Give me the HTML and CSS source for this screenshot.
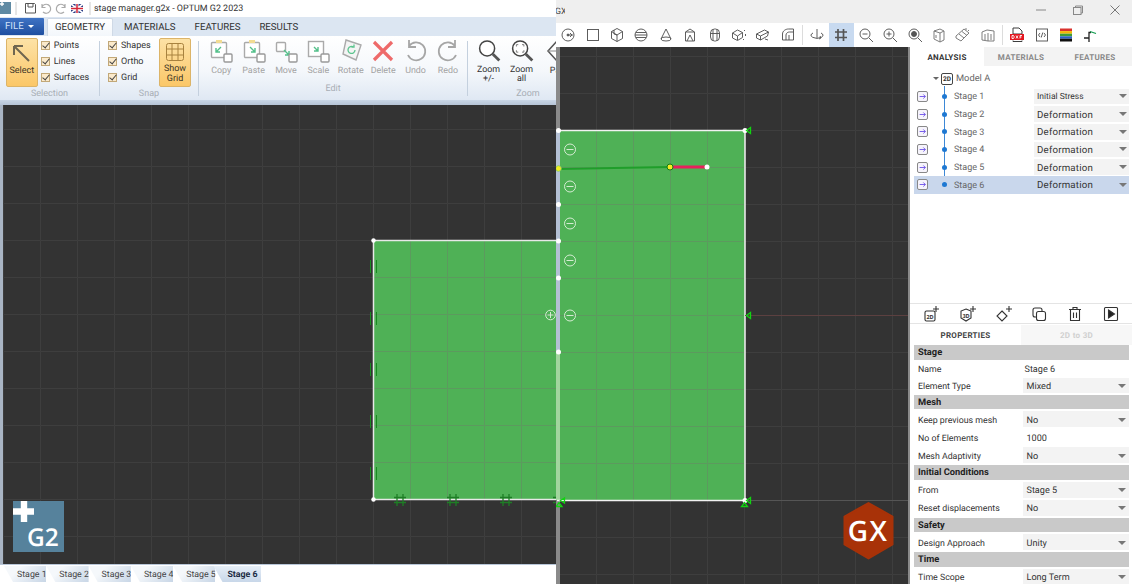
FILE: index.html
```html
<!DOCTYPE html>
<html lang="en">
<head>
<meta charset="utf-8">
<title>stage manager.g2x - OPTUM G2 2023</title>
<link rel="stylesheet" href="styles.css">
</head>
<body>
<div class="app">
  <section class="g2">
    <header class="g2-title">
      <svg class="qa" width="94" height="15" viewBox="0 0 94 15">
        <rect x="0" y="1" width="11" height="12" fill="#5f8aa3"/>
        <path d="M0 3h4M2 1v4" stroke="#fff" stroke-width="1.400"/>
        <path d="M16 1v13" stroke="#ccc"/>
        <path d="M25.500 2.500h9l1 1v8.500h-10z" fill="none" stroke="#555"/>
        <path d="M28 3v3h5V3" fill="none" stroke="#555"/>
        <path d="M42 6a4.500 4.500 0 1 1 1 5M42 3v3.500h3.500" fill="none" stroke="#aaa" stroke-width="1.200"/>
        <path d="M65 6a4.500 4.500 0 1 0-1 5M65 3v3.500h-3.500" fill="none" stroke="#aaa" stroke-width="1.200"/>
        <rect x="71" y="3" width="12" height="9" fill="#2b3f87"/>
        <path d="M71 3l12 9M83 3l-12 9" stroke="#fff" stroke-width="1.600"/>
        <path d="M77 3v9M71 7.500h12" stroke="#fff" stroke-width="3"/>
        <path d="M77 3v9M71 7.500h12" stroke="#d3263a" stroke-width="1.500"/>
        <path d="M90 1v13" stroke="#ccc"/>
      </svg>
      <span class="g2-name">stage manager.g2x - OPTUM G2 2023</span>
    </header>
    <nav class="g2-tabs">
      <span class="file">FILE <i class="file-caret"></i></span>
      <span class="rtab rtab-on">GEOMETRY</span>
      <span class="rtab">MATERIALS</span>
      <span class="rtab">FEATURES</span>
      <span class="rtab">RESULTS</span>
    </nav>
    <div class="ribbon">
      <div class="group g-sel">
        <div class="group-body">
          <div class="big-on b-select">
            <svg width="22" height="22" viewBox="0 0 22 22"><path d="M3 3l15 15M3 3h9M3 3v9" fill="none" stroke="#6f6650" stroke-width="2"/></svg>
            <span>Select</span>
          </div>
          <ul class="checks">
            <li><i class="cb"></i>Points</li>
            <li><i class="cb"></i>Lines</li>
            <li><i class="cb"></i>Surfaces</li>
          </ul>
        </div>
        <div class="glabel">Selection</div>
      </div>
      <div class="group g-snap">
        <div class="group-body">
          <ul class="checks">
            <li><i class="cb"></i>Shapes</li>
            <li><i class="cb"></i>Ortho</li>
            <li><i class="cb"></i>Grid</li>
          </ul>
          <div class="big-on b-grid">
            <svg width="20" height="20" viewBox="0 0 20 20"><rect x="1.500" y="1.500" width="17" height="17" rx="2" fill="none" stroke="#a8823f"/><path d="M7 1.500v17M13 1.500v17M1.500 7h17M1.500 13h17" stroke="#a8823f"/></svg>
            <span>Show<br>Grid</span>
          </div>
        </div>
        <div class="glabel">Snap</div>
      </div>
      <div class="group g-edit">
        <div class="group-body tools">
          <div class="tool"><svg width="24" height="24" viewBox="0 0 24 24"><rect x="2.500" y="3.500" width="15" height="15" rx="1" fill="#fff" stroke="#aaa" stroke-width="1.400"/><rect x="7" y="1" width="6" height="3" fill="#f2dc92"/><path d="M7 13l5-5M7 9v4h4" fill="none" stroke="#53c08a" stroke-width="1.400"/><rect x="15" y="15" width="8" height="8" rx="1" fill="#fff" stroke="#999" stroke-width="1.400"/></svg><span>Copy</span></div>
          <div class="tool"><svg width="24" height="24" viewBox="0 0 24 24"><rect x="2.500" y="3.500" width="15" height="15" rx="1" fill="#fff" stroke="#aaa" stroke-width="1.400"/><rect x="7" y="1" width="6" height="3" fill="#f2dc92"/><path d="M13 13L8 8M13 9v4H9" fill="none" stroke="#53c08a" stroke-width="1.400"/><rect x="15" y="15" width="8" height="8" rx="1" fill="#fff" stroke="#999" stroke-width="1.400"/></svg><span>Paste</span></div>
          <div class="tool"><svg width="24" height="24" viewBox="0 0 24 24"><rect x="2.500" y="3.500" width="9" height="9" rx="1" fill="#fff" stroke="#aaa" stroke-width="1.400"/><path d="M10 11l5 5M15 12v4h-4" fill="none" stroke="#53c08a" stroke-width="1.400"/><rect x="15" y="15" width="8" height="8" rx="1" fill="#fff" stroke="#999" stroke-width="1.400"/></svg><span>Move</span></div>
          <div class="tool"><svg width="24" height="24" viewBox="0 0 24 24"><rect x="2.500" y="2.500" width="15" height="15" fill="#fff" stroke="#aaa" stroke-width="1.400"/><path d="M8 8l4 4M12 8v4H8" fill="none" stroke="#53c08a" stroke-width="1.400"/><rect x="15" y="15" width="8" height="8" rx="1" fill="#fff" stroke="#999" stroke-width="1.400"/></svg><span>Scale</span></div>
          <div class="tool"><svg width="24" height="24" viewBox="0 0 24 24"><path d="M7 1l15 5-5 15-13-6z" fill="#f4f4f4" stroke="#aaa" stroke-width="1.400"/><path d="M16 11a3.500 3.500 0 1 1-1.500-3M15 5.500V8h-2.500" fill="none" stroke="#5cc48e" stroke-width="1.300"/></svg><span>Rotate</span></div>
          <div class="tool"><svg width="24" height="24" viewBox="0 0 24 24"><path d="M3 3l18 18M21 3L3 21" stroke="#ee6a6a" stroke-width="3.200"/></svg><span>Delete</span></div>
          <div class="tool"><svg width="24" height="24" viewBox="0 0 24 24"><path d="M5 7a9 9 0 1 1-1 9M5 1v7h7" fill="none" stroke="#a6a6a6" stroke-width="1.800"/></svg><span>Undo</span></div>
          <div class="tool"><svg width="24" height="24" viewBox="0 0 24 24"><path d="M19 7a9 9 0 1 0 1 9M19 1v7h-7" fill="none" stroke="#a6a6a6" stroke-width="1.800"/></svg><span>Redo</span></div>
        </div>
        <div class="glabel">Edit</div>
      </div>
      <div class="group g-zoom">
        <div class="group-body tools">
          <div class="tool tool-on"><svg width="24" height="24" viewBox="0 0 24 24"><circle cx="10" cy="10" r="8" fill="#fff" stroke="#444" stroke-width="1.600"/><path d="M16 16l7 7" stroke="#555" stroke-width="3"/></svg><span>Zoom<br>+/-</span></div>
          <div class="tool tool-on"><svg width="24" height="24" viewBox="0 0 24 24"><circle cx="10" cy="10" r="8" fill="#fff" stroke="#444" stroke-width="1.600"/><path d="M16 16l7 7" stroke="#555" stroke-width="3"/><path d="M6 8V6h2M12 6h2v2M14 12v2h-2M8 14H6v-2" fill="none" stroke="#777"/></svg><span>Zoom<br>all</span></div>
          <div class="tool tool-on tool-pan"><svg width="24" height="24" viewBox="0 0 24 24"><path d="M12 1l10 11-10 11L2 12z" fill="#fff" stroke="#555" stroke-width="1.500"/><path d="M12 1v22M2 12h20" stroke="#888"/></svg><span>Pan</span></div>
        </div>
        <div class="glabel">Zoom</div>
      </div>
    </div>
    <div class="ribbon-foot"></div>
    <div class="g2-view">
      <svg class="canvas" viewBox="3 105 553 459" width="553" height="459">
        <defs>
          <pattern id="gridL" x="40" y="18" width="37" height="37" patternUnits="userSpaceOnUse"><path d="M37 .5H.5V37" fill="none" stroke="#3e3e3e"/></pattern>
          <pattern id="gridLg" x="40" y="18" width="37" height="37" patternUnits="userSpaceOnUse"><path d="M37 .5H.5V37" fill="none" stroke="#5c9a5e"/></pattern>
        </defs>
        <rect x="3" y="105" width="553" height="459" fill="#333"/>
        <rect x="3" y="105" width="553" height="459" fill="url(#gridL)"/>
        <rect x="373" y="240.500" width="183" height="259" fill="#4fb156"/>
        <rect x="373" y="240.500" width="183" height="259" fill="url(#gridLg)"/>
        <path d="M556 240.500H373.500V499.500H556" fill="none" stroke="#e8e8e8" stroke-width="1.500"/>
        <circle cx="373.500" cy="240.500" r="2.200" fill="#fff"/>
        <circle cx="373.500" cy="499.500" r="2.200" fill="#fff"/>
        <path d="M370.500 260v13M376.500 260v13M370.500 312v13M376.500 312v13M370.500 363v13M376.500 363v13M370.500 415v13M376.500 415v13M370.500 467v13M376.500 467v13" stroke="#1a8a22"/>
        <path d="M397 494v12M403 494v12M394 497.500h12M394 502.500h12M450 494v12M456 494v12M447 497.500h12M447 502.500h12M503 494v12M509 494v12M500 497.500h12M500 502.500h12M553 497.500h3M553 502.500h3" stroke="#1e7d25" stroke-width="1.300"/>
        <g fill="none" stroke="#d4ecd2" stroke-width="1">
          <circle cx="550.500" cy="315" r="4.800"/>
          <path d="M547.500 315h6M550.500 312v6"/>
        </g>
        <rect x="13" y="501" width="51" height="51" fill="#56829c"/>
        <path d="M24 501v21M13 511.500h21" stroke="#fff" stroke-width="6.400"/>
        <text class="logo-g2" x="27" y="545.500">G2</text>
      </svg>
    </div>
    <div class="stages">
      <span class="stage">Stage 1</span>
      <span class="stage">Stage 2</span>
      <span class="stage">Stage 3</span>
      <span class="stage">Stage 4</span>
      <span class="stage">Stage 5</span>
      <span class="stage stage-on">Stage 6</span>
    </div>
  </section>

  <section class="gx">
    <header class="gx-title">
      <span class="gx-name">GX</span>
      <div class="winbtns">
        <svg width="12" height="12" viewBox="0 0 12 12"><path d="M1 6h10" stroke="#888"/></svg>
        <svg width="12" height="12" viewBox="0 0 12 12"><path d="M3.500 3.500V2h7v7H9" fill="none" stroke="#888"/><rect x="1.500" y="3.500" width="7.500" height="7" fill="none" stroke="#888"/></svg>
        <svg width="12" height="12" viewBox="0 0 12 12"><path d="M1.500 1.500l9 9M10.500 1.500l-9 9" stroke="#777"/></svg>
      </div>
    </header>
    <div class="gx-tools">
      <span class="tb"><svg viewBox="0 0 16 16"><circle cx="8" cy="8" r="6" fill="none"/><circle cx="8" cy="8" r="1"/><path d="M8 8h5M10 6l2 2-2 2" fill="none"/></svg></span>
      <span class="tb"><svg viewBox="0 0 16 16"><rect x="2.500" y="2.500" width="11" height="11" fill="none"/></svg></span>
      <span class="tb"><svg viewBox="0 0 16 16"><path d="M8 1.500l5.500 3v7L8 14.500l-5.500-3v-7zM2.500 4.500L8 8l5.500-3.500M8 8v6.500M5 3v4l3 1" fill="none"/></svg></span>
      <span class="tb"><svg viewBox="0 0 16 16"><circle cx="8" cy="8" r="6" fill="none"/><path d="M2 8h12M3 5.500h10M3 10.500h10" fill="none"/></svg></span>
      <span class="tb"><svg viewBox="0 0 16 16"><path d="M8 2L3 12M8 2l5 10" fill="none"/><ellipse cx="8" cy="12" rx="5" ry="2" fill="none"/></svg></span>
      <span class="tb"><svg viewBox="0 0 16 16"><path d="M3.500 5L8 2l4.500 3v9h-9zM3.500 5H12.500M5 14l3-6 3 6" fill="none"/></svg></span>
      <span class="tb"><svg viewBox="0 0 16 16"><rect x="3.500" y="2" width="9" height="12" rx="4" fill="none"/><path d="M6 2.500v11M10 2.500v11M3.500 6.500h9" fill="none"/></svg></span>
      <span class="tb"><svg viewBox="0 0 16 16"><path d="M1.500 6l5-3 5 2.500v5l-5 3-5-2.500zM1.500 6l5 3 5-3.500M6.500 9v4M13 3l1 1M14.500 7v2M13 12l-1 1" fill="none"/></svg></span>
      <span class="tb"><svg viewBox="0 0 16 16"><path d="M1.500 7l8-4 4 2-1 4-7 4-4-2zM1.500 7l4 2 8-4M5.500 9v4M10 12l3 1" fill="none"/></svg></span>
      <span class="tb tb-end"><svg viewBox="0 0 16 16"><path d="M2.500 13V7c0-3 3-5 6-5h5v11zM6 13V8c0-2 2-3 3.500-3h4M9 13V8" fill="none"/></svg></span>
      <i class="tb-sep"></i>
      <span class="tb"><svg viewBox="0 0 16 16"><path d="M8 2v9M4 6a6 3 0 1 0 8 0M10 12l2-1-1-2" fill="none"/></svg></span>
      <span class="tb tb-on"><svg viewBox="0 0 16 16"><path class="thick" d="M5 2v12M10.500 2v12M2 5h12M2 10.500h12" fill="none"/></svg></span>
      <span class="tb"><svg viewBox="0 0 16 16"><circle cx="7" cy="7" r="5" fill="none"/><path d="M11 11l4 4M4.500 7h5" fill="none"/></svg></span>
      <span class="tb"><svg viewBox="0 0 16 16"><circle cx="7" cy="7" r="5" fill="none"/><path d="M11 11l4 4M4.500 7h5M7 4.500v5" fill="none"/></svg></span>
      <span class="tb"><svg viewBox="0 0 16 16"><circle cx="7" cy="7" r="5" fill="none"/><circle cx="7" cy="7" r="2.500"/><path d="M11 11l4 4" fill="none"/></svg></span>
      <span class="tb tb-gray"><svg viewBox="0 0 16 16"><path d="M3 4l6-2 4 2v9l-4 2-6-3zM9 6v9M3 4l6 2 4-2M5 8v3" fill="none"/></svg></span>
      <span class="tb tb-gray"><svg viewBox="0 0 16 16"><path d="M1 9l8-7 5 4-8 8-5-3zM4 7l5 4M7 4.500l5 4" fill="none"/><path d="M11 1v2M14 3l-1 1" fill="none"/></svg></span>
      <span class="tb tb-gray tb-end"><svg viewBox="0 0 16 16"><path d="M2 5l5-2 7 1v10H8l-6-1zM8 6v8M5 7v6M11 7v6" fill="none"/></svg></span>
      <i class="tb-sep"></i>
      <span class="tb"><svg viewBox="0 0 16 16" class="raw"><path d="M4 1h6l3 3v3H4z" fill="#fff" stroke="#333"/><rect x="1" y="7" width="14" height="6" fill="#e3161f"/><path d="M4 13.500v1h9v-1" fill="none" stroke="#333"/><path d="M3 8.500v3h1.500l.8-1.500-.8-1.500zM7 8.500l2 3M9 8.500l-2 3M11 11.500v-3h2M11 10h1.500" fill="none" stroke="#fff" stroke-width=".9"/></svg></span>
      <span class="tb"><svg viewBox="0 0 16 16"><rect x="2.500" y="2" width="11" height="12" fill="none"/><path d="M6 6L4.500 8 6 10M10 6l1.500 2L10 10M8.800 5.500l-1.600 5" fill="none"/></svg></span>
      <span class="tb"><svg viewBox="0 0 16 16" class="raw"><rect x="2" y="1.500" width="12" height="2.600" fill="#d9322e"/><rect x="2" y="4.100" width="12" height="2.600" fill="#f2b705"/><rect x="2" y="6.700" width="12" height="2.600" fill="#3f9e36"/><rect x="2" y="9.300" width="12" height="2.400" fill="#2b62c7"/><rect x="2" y="11.700" width="12" height="2.800" fill="#111"/></svg></span>
      <span class="tb"><svg viewBox="0 0 16 16" class="raw"><path d="M2 11h5M7 15V5.500h2" fill="none" stroke="#222" stroke-width="1.300"/><path d="M8 4.500l6 2" fill="none" stroke="#0d9c4c" stroke-width="1.300"/></svg></span>
    </div>
    <div class="gx-body">
      <svg class="canvas gx-canvas" viewBox="556 47 352 537" width="352" height="537">
        <defs>
          <pattern id="gridR" x="559" y="19" width="37" height="37" patternUnits="userSpaceOnUse"><path d="M37 .5H.5V37" fill="none" stroke="#3e3e3e"/></pattern>
          <pattern id="gridRg" x="559" y="19" width="37" height="37" patternUnits="userSpaceOnUse"><path d="M37 .5H.5V37" fill="none" stroke="#5c9a5e"/></pattern>
        </defs>
        <rect x="556" y="47" width="352" height="537" fill="#333"/>
        <rect x="556" y="47" width="352" height="537" fill="url(#gridR)"/>
        <rect x="560" y="130" width="185" height="370" fill="#4fb156"/>
        <rect x="560" y="130" width="185" height="370" fill="url(#gridRg)"/>
        <rect x="556" y="47" width="4" height="83" fill="#8a8a8a"/>
        <rect x="556" y="130" width="4" height="222" fill="#b4c0d4"/>
        <rect x="556" y="352" width="4" height="148" fill="#a2d59e"/>
        <rect x="556" y="500" width="4" height="84" fill="#8a8a8a"/>
        <path d="M557 130.500H745V500.500H557" fill="none" stroke="#f2f2f2" stroke-width="1.500"/>
        <path d="M745 315.500H908" stroke="#5c4040"/>
        <path d="M745 500.500H908" stroke="#555"/>
        <path d="M558 169l112-2" stroke="#1f9e2a" stroke-width="2"/>
        <path d="M671 167h36" stroke="#e8205c" stroke-width="3"/>
        <circle cx="670" cy="167" r="3" fill="#f5ee20" stroke="#117a1a"/>
        <circle cx="707" cy="167" r="2.500" fill="#fff"/>
        <circle cx="745" cy="130.500" r="2.500" fill="#fff"/>
        <circle cx="745" cy="500.500" r="2.500" fill="#fff"/>
        <g fill="#fff">
          <circle cx="558.500" cy="130.500" r="2.500"/>
          <circle cx="558.500" cy="204.500" r="2.500"/>
          <circle cx="558.500" cy="241" r="2.500"/>
          <circle cx="558.500" cy="278" r="2.500"/>
          <circle cx="558.500" cy="352" r="2.500"/>
        </g>
        <circle cx="558.500" cy="168.500" r="2.800" fill="#f5ee20" stroke="#7fc85f" stroke-width=".8"/>
        <g fill="none" stroke="#d4ecd2" stroke-width="1">
          <circle cx="570" cy="149.500" r="5.500"/><path d="M566.500 149.500h7"/>
          <circle cx="570" cy="186.500" r="5.500"/><path d="M566.500 186.500h7"/>
          <circle cx="570" cy="223.500" r="5.500"/><path d="M566.500 223.500h7"/>
          <circle cx="570" cy="260.500" r="5.500"/><path d="M566.500 260.500h7"/>
          <circle cx="570" cy="315.500" r="5.500"/><path d="M566.500 315.500h7"/>
        </g>
        <g fill="none" stroke="#11d411" stroke-width="1.300">
          <path d="M750.500 127.500v6l-4-3z"/>
          <path d="M750.500 312.500v6l-4-3z"/>
          <path d="M750.500 497.500v6l-4-3z"/>
          <path d="M741.500 506.500h6l-3-4z"/>
          <path d="M564.500 498v5l-4-2.500zM556 506.500h6l-3-4z"/>
        </g>
        <path d="M868.500 503l24 13.500v28l-24 14-24-14v-28z" fill="#a83208" stroke="#a83208" stroke-width="2" stroke-linejoin="round"/>
        <text class="logo-gx" x="868" y="541">GX</text>
      </svg>
      <div class="seam-r"></div>
      <aside class="panel">
        <div class="ptabs">
          <span class="ptab ptab-on">ANALYSIS</span>
          <span class="ptab">MATERIALS</span>
          <span class="ptab">FEATURES</span>
        </div>
        <div class="tree">
          <div class="model"><i class="caret-s"></i><span class="badge">2D</span><span>Model A</span></div>
          <i class="trunk"></i>
          <div class="srow"><svg class="go" viewBox="0 0 11 11"><path d="M2 5.500h7M6.500 3L9 5.500 6.500 8"/></svg><i class="dot"></i><span class="sname">Stage 1</span><span class="sel sel-init">Initial Stress<i class="caret"></i></span></div>
          <div class="srow"><svg class="go" viewBox="0 0 11 11"><path d="M2 5.500h7M6.500 3L9 5.500 6.500 8"/></svg><i class="dot"></i><span class="sname">Stage 2</span><span class="sel">Deformation<i class="caret"></i></span></div>
          <div class="srow"><svg class="go" viewBox="0 0 11 11"><path d="M2 5.500h7M6.500 3L9 5.500 6.500 8"/></svg><i class="dot"></i><span class="sname">Stage 3</span><span class="sel">Deformation<i class="caret"></i></span></div>
          <div class="srow"><svg class="go" viewBox="0 0 11 11"><path d="M2 5.500h7M6.500 3L9 5.500 6.500 8"/></svg><i class="dot"></i><span class="sname">Stage 4</span><span class="sel">Deformation<i class="caret"></i></span></div>
          <div class="srow"><svg class="go" viewBox="0 0 11 11"><path d="M2 5.500h7M6.500 3L9 5.500 6.500 8"/></svg><i class="dot"></i><span class="sname">Stage 5</span><span class="sel">Deformation<i class="caret"></i></span></div>
          <div class="srow srow-on"><svg class="go" viewBox="0 0 11 11"><path d="M2 5.500h7M6.500 3L9 5.500 6.500 8"/></svg><i class="dot"></i><span class="sname">Stage 6</span><span class="sel">Deformation<i class="caret"></i></span></div>
        </div>
        <div class="actions">
          <svg viewBox="0 0 18 18"><rect x="2" y="6" width="10" height="10" rx="1.500" fill="none"/><path d="M13 1v6M10 4h6" fill="none"/><text x="7" y="13.500" class="mini">2D</text></svg>
          <svg viewBox="0 0 18 18"><path d="M7 4l5 2v7l-5 3-5-3V6z" fill="none"/><path d="M14 1v6M11 4h6" fill="none"/><text x="7" y="12.500" class="mini">3D</text></svg>
          <svg viewBox="0 0 18 18"><path d="M7 6l5 5-5 5-5-5z" fill="none"/><path d="M14 1v6M11 4h6" fill="none"/></svg>
          <svg viewBox="0 0 18 18"><rect x="3" y="3" width="9" height="9" rx="2" fill="none"/><rect x="6.500" y="6.500" width="9" height="9" rx="2" fill="#fff"/></svg>
          <svg viewBox="0 0 18 18"><path d="M3 4.500h12M7 4.500V2.500h4v2M4.500 4.500V15.500h9V4.500M7.500 7.500v5.500M10.500 7.500v5.500" fill="none"/></svg>
          <svg viewBox="0 0 18 18"><rect x="2.500" y="2.500" width="13" height="13" rx="1" fill="none"/><path d="M6.500 5l6 4-6 4z" fill="#222"/></svg>
        </div>
        <div class="ptabs ptabs-2">
          <span class="ptab ptab-on">PROPERTIES</span>
          <span class="ptab ptab-off">2D to 3D</span>
        </div>
        <div class="props">
          <h4>Stage</h4>
          <div class="prow prow-s"><span>Name</span><span class="val val-plain">Stage 6</span></div>
          <div class="prow prow-s"><span>Element Type</span><span class="val">Mixed<i class="caret"></i></span></div>
          <h4>Mesh</h4>
          <div class="prow"><span>Keep previous mesh</span><span class="val">No<i class="caret"></i></span></div>
          <div class="prow"><span>No of Elements</span><span class="val val-input">1000</span></div>
          <div class="prow"><span>Mesh Adaptivity</span><span class="val">No<i class="caret"></i></span></div>
          <h4>Initial Conditions</h4>
          <div class="prow"><span>From</span><span class="val">Stage 5<i class="caret"></i></span></div>
          <div class="prow"><span>Reset displacements</span><span class="val">No<i class="caret"></i></span></div>
          <h4>Safety</h4>
          <div class="prow"><span>Design Approach</span><span class="val">Unity<i class="caret"></i></span></div>
          <h4>Time</h4>
          <div class="prow"><span>Time Scope</span><span class="val">Long Term<i class="caret"></i></span></div>
        </div>
      </aside>
    </div>
  </section>
</div>
</body>
</html>
```
FILE: styles.css
```css
* { box-sizing: border-box; }
html, body { margin: 0; height: 100%; overflow: hidden; background: #fff; }
body { font-family: Roboto, "Open Sans", sans-serif; color: #333; text-rendering: geometricPrecision; }
ul { list-style: none; margin: 0; padding: 0; }
i { font-style: normal; }

.app { display: flex; width: 1132px; height: 584px; }

/* left window */
.g2 { width: 556px; height: 584px; display: flex; flex-direction: column; overflow: hidden; flex: none; }
.g2-title { height: 17px; display: flex; align-items: center; background: #fff; flex: none; }
.qa { flex: none; }
.g2-name { font-size: 8.950px; color: #333; white-space: nowrap; }
.g2-tabs { height: 19px; background: #dce6f2; display: flex; align-items: flex-end; flex: none; font-size: 9.700px; }
.file { width: 44px; height: 17px; align-self: center; background: linear-gradient(#3f73c4, #1f4fa0); color: #cfe0f8; display: flex; align-items: center; padding-left: 5px; gap: 4px; border-radius: 0 1px 1px 0; }
.file-caret { border: 3px solid transparent; border-top-color: #fff; border-bottom: 0; }
.rtab { height: 18px; display: flex; align-items: center; padding: 0 9.500px; color: #333; white-space: nowrap; }
.rtab-on { background: linear-gradient(#fff, #f3f7fb); border-radius: 2px 2px 0 0; border: 1px solid #cfd9e6; border-bottom: 0; margin: 0 1.500px 0 3px; width: 66px; padding: 0; justify-content: center; }

.ribbon { height: 64px; background: linear-gradient(#fff 0%, #f4f7fb 55%, #dfe8f3 100%); display: flex; flex: none; overflow: hidden; }
.group { display: flex; flex-direction: column; align-items: stretch; border-right: 1px solid #c4d0de; margin: 5px 0 4px; position: relative; flex: none; }
.group-body { display: flex; height: 46.500px; margin-top: -3px; }
.glabel { font-size: 9px; text-align: center; color: #a8aeb5; margin-top: 2px; line-height: 14px; }
.g-sel { width: 100px; }
.g-sel .group-body { padding-left: 6px; }
.g-snap { width: 99px; }
.g-snap .group-body { padding-left: 8px; }
.g-edit { width: 269px; }
.g-zoom { width: 120px; border-right: 0; }
.big-on { background: linear-gradient(#fde2a6, #fbc768); border: 1px solid #dcb468; border-radius: 2px; display: flex; flex-direction: column; align-items: center; font-size: 9px; line-height: 10px; color: #3a3325; text-align: center; }
.b-select { width: 32px; height: 49px; padding-top: 4px; gap: 1px; }
.b-grid { width: 32px; height: 49px; padding-top: 3px; gap: 2px; }
.checks { display: flex; flex-direction: column; gap: 6px; padding: 2.500px 0 0 3px; font-size: 9px; line-height: 10px; width: 62px; white-space: nowrap; }
.g-snap .checks { width: 51px; padding-left: 0; }
.checks li { display: flex; align-items: center; gap: 4px; }
.cb { width: 9px; height: 9px; background: #fbeacb; border: 1px solid #c2a878; position: relative; flex: none; }
.cb::after { content: ""; position: absolute; left: 2px; top: -1px; width: 3px; height: 6px; border: solid #444; border-width: 0 1.300px 1.300px 0; transform: rotate(40deg); }
.tools { padding-left: 6px; }
.g-zoom .tools { padding-left: 4px; }
.tool { width: 32.400px; display: flex; flex-direction: column; align-items: center; font-size: 8.900px; line-height: 9.500px; color: #a3a3a3; gap: 4px; text-align: center; flex: none; padding-top: 1px; }
.g-zoom .tool { width: 33px; }
.g-zoom .tool-pan { margin-left: 3px; }
.tool-on { color: #333; }
.ribbon-foot { height: 5px; background: linear-gradient(#c9d6e6, #b6c4d6); flex: none; }
.g2-view { height: 459px; flex: none; padding-left: 3px; background: #a9b5c4; }
.canvas { display: block; }
.logo-g2 { font: 600 24.500px "Open Sans", sans-serif; fill: #fff; }
.stages { height: 20px; display: flex; padding: 1px 0 0 4px; background: #fff; border-top: 1px solid #b8c6d8; flex: none; }
.stage { width: 42.300px; height: 16px; font-size: 8.800px; line-height: 18px; text-align: center; color: #444; background: linear-gradient(135deg, #f5f8fb 30%, #c8d6e6); clip-path: polygon(0 0, 100% 0, 100% 100%, 9px 100%); padding-left: 13px; padding-right: 1px; white-space: nowrap; }
.stage-on { background: linear-gradient(#e6eef7, #c8d7e9); font-weight: 700; color: #1c2c44; width: 48px; margin-left: -2px; padding-left: 10px; padding-right: 0; }

/* right window */
.gx { width: 576px; height: 584px; display: flex; flex-direction: column; flex: none; }
.gx-title { height: 23px; background: #efefef; display: flex; align-items: center; justify-content: space-between; flex: none; padding-right: 11.500px; }
.gx-name { font-size: 8.800px; color: #444; width: 9px; overflow: hidden; white-space: nowrap; text-indent: -1px; }
.winbtns { display: flex; gap: 25px; margin-top: -3px; }
.gx-tools { height: 24px; background: #fff; display: flex; align-items: stretch; flex: none; }
.tb { width: 24.400px; flex: none; display: flex; align-items: center; justify-content: center; }
.tb svg { width: 16px; height: 16px; stroke: #555; stroke-width: .95; fill: #555; }
.tb svg.raw { stroke: none; fill: none; }
.tb-gray svg { stroke: #777; }
.tb .thick { stroke-width: 1.700; }
.tb-on { background: #c8daf0; }
.tb-sep { width: 5px; flex: none; position: relative; }
.tb-sep::after { content: ""; position: absolute; left: 2px; top: 2px; bottom: 2px; width: 1px; background: #dcdcdc; }
.gx-body { height: 537px; display: flex; flex: none; }
.gx-canvas { flex: none; }
.seam-r { width: 2px; flex: none; background: #8a8a8a; }
.panel { width: 222px; flex: none; background: #fff; font-size: 8.800px; color: #333; position: relative; overflow: hidden; }
.ptabs { height: 19px; display: flex; font-weight: 700; font-size: 8px; letter-spacing: .3px; color: #888; }
.ptab { width: 74px; display: flex; align-items: center; justify-content: center; background: #f3f3f3; padding-top: 2px; }
.ptab-on { background: #fff; color: #333; }
.ptabs-2 { height: 20px; margin-top: 1px; }
.ptabs-2 .ptab { width: 111px; padding-top: 0; }
.ptabs-2 .ptab-on { background: #fff; color: #444; }
.ptab-off { color: #d0d0d0; background: #f7f7f7; }
.tree { height: 238px; padding: 3.500px 3px 0 4px; position: relative; border-bottom: 1px solid #e4e4e4; }
.model { height: 18px; display: flex; align-items: center; padding-left: 19px; color: #666; font-size: 9.300px; }
.caret-s { border: 3px solid transparent; border-top-color: #666; border-bottom: 0; margin-right: 2px; }
.badge { width: 12px; height: 12px; border: 1px solid #444; border-radius: 2px; font-size: 6.500px; font-weight: 700; display: flex; align-items: center; justify-content: center; margin-right: 3px; color: #333; }
.trunk { position: absolute; left: 34px; top: 20px; width: 1px; height: 99px; background: #3d88d6; }
.srow { height: 17.700px; display: flex; align-items: center; position: relative; padding-left: 3px; color: #666; }
.srow-on { background: #c9d7ec; }
.go { width: 11px; height: 11px; border: 1px solid #888; border-radius: 2px; background: #f6f4fb; flex: none; fill: none; stroke: #6b4fe8; stroke-width: 1.100; }
.dot { width: 5px; height: 5px; border-radius: 50%; background: #1e78d2; margin: 0 0 0 14px; flex: none; position: relative; }
.sname { margin-left: 7px; width: 80px; font-size: 9px; flex: none; padding-top: 2px; }
.sel { flex: 1; align-self: stretch; margin: 1px 0; padding: 2px 2px 0 3px; display: flex; align-items: center; justify-content: space-between; background: #f3f3f3; color: #333; font-size: 9.700px; letter-spacing: .2px; }
.sel-init { font-size: 8.500px; letter-spacing: 0; }
.srow-on .sel { background: transparent; margin: 0; }
.caret { border: 4px solid transparent; border-top: 4px solid #777; border-bottom: 0; flex: none; margin-top: -2px; }
.actions { height: 19px; display: flex; padding-left: 13px; gap: 17.800px; align-items: center; border-bottom: 1px solid #e4e4e4; box-sizing: content-box; }
.actions svg { width: 18px; height: 18px; stroke: #333; stroke-width: 1.100; flex: none; }
.mini { font-size: 5.500px; font-weight: 700; text-anchor: middle; stroke: none; fill: #333; font-family: "Open Sans", sans-serif; }
.props { padding: 0 3px 0 4px; }
h4 { margin: 0; height: 14.700px; background: #c9c9c9; font-size: 9.300px; font-weight: 700; color: #222; padding-left: 4px; line-height: 16px; }
.prow + h4 { margin-top: 1px; }
.prow { height: 17.900px; display: flex; align-items: center; padding-left: 4px; }
.prow-s { height: 17px; }
.prow > span:first-child { width: 105px; flex: none; padding-top: 3px; }
h4 + .prow:not(.prow-s) { margin-top: 1px; }
.val { flex: 1; align-self: stretch; margin: 1px 0; background: #f3f3f3; display: flex; align-items: center; justify-content: space-between; padding: 3px 3px 0 3.500px; font-size: 9.100px; }
.val-plain { background: #fff; padding-left: 1.500px; }
.val-input { background: #fff; }
.logo-gx { font: 600 28px "Open Sans", sans-serif; fill: #fff; text-anchor: middle; letter-spacing: 1.500px; }
```
